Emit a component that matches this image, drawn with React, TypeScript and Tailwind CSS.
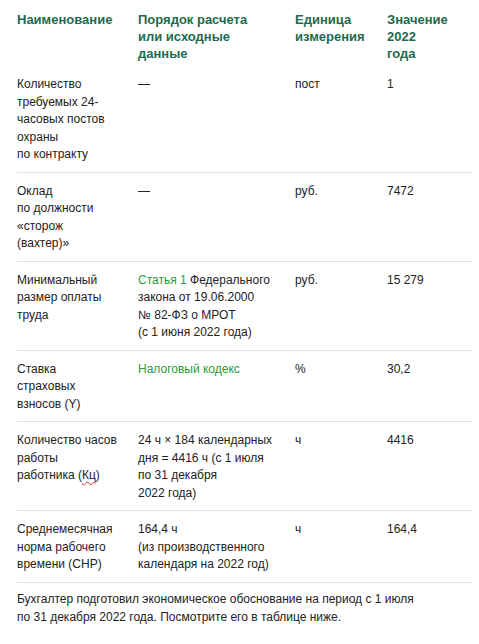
const rows = [
  {
    name: <>Количество<br />требуемых 24-<br />часовых постов<br />охраны<br />по контракту</>,
    calc: <>—</>,
    unit: "пост",
    value: "1",
  },
  {
    name: <>Оклад<br />по должности<br />«сторож<br />(вахтер)»</>,
    calc: <>—</>,
    unit: "руб.",
    value: "7472",
  },
  {
    name: <>Минимальный<br />размер оплаты<br />труда</>,
    calc: (
      <>
        <span className="text-[#2b9a3b]">Статья 1</span> Федерального<br />закона от 19.06.2000<br />№&nbsp;82-ФЗ о МРОТ
        <br />(с 1 июня 2022 года)
      </>
    ),
    unit: "руб.",
    value: "15 279",
  },
  {
    name: <>Ставка<br />страховых<br />взносов (Y)</>,
    calc: <span className="text-[#2b9a3b]">Налоговый кодекс</span>,
    unit: "%",
    value: "30,2",
  },
  {
    name: (
      <>
        Количество часов<br />работы<br />работника (<span className="underline decoration-wavy decoration-[#e02020] decoration-1 underline-offset-2">Кц</span>)
      </>
    ),
    calc: <>24 ч × 184 календарных<br />дня = 4416 ч (с 1 июля<br />по 31 декабря<br />2022 года)</>,
    unit: "ч",
    value: "4416",
  },
  {
    name: <>Среднемесячная<br />норма рабочего<br />времени (СНР)</>,
    calc: <>164,4 ч<br />(из производственного<br />календаря на 2022 год)</>,
    unit: "ч",
    value: "164,4",
  },
];

const cols = "grid grid-cols-[121px_157px_92px_85px]";

export default function App() {
  return (
    <div className="min-h-[644px] bg-white font-['Liberation_Sans',Arial,sans-serif] text-[12px] leading-[17.5px] text-[#222]">
      <div className="ml-[17px] w-[455px]">
        <div className={`${cols} pt-[11px] pb-[4px] text-[13px] leading-[17px] font-bold text-[#1e6b4f]`}>
          <div className="pr-[20px]">Наименование</div>
          <div className="pr-[20px]">Порядок расчета<br />или исходные<br />данные</div>
          <div className="pr-[20px]">Единица<br />измерения</div>
          <div className="pr-[20px]">Значение<br />2022<br />года</div>
        </div>
        {rows.map((row, i) => (
          <div key={i} className={`${cols} border-b border-[#e2e2e2] pt-[10px] pb-[8px]`}>
            <div className="pr-[20px]">{row.name}</div>
            <div className="pr-[20px]">{row.calc}</div>
            <div className="pr-[20px]">{row.unit}</div>
            <div className="pr-[20px]">{row.value}</div>
          </div>
        ))}
        <p className="pt-[7px] leading-[18px]">
          Бухгалтер подготовил экономическое обоснование на период с 1 июля
          <br />
          по 31 декабря 2022 года. Посмотрите его в таблице ниже.
        </p>
      </div>
    </div>
  );
}
